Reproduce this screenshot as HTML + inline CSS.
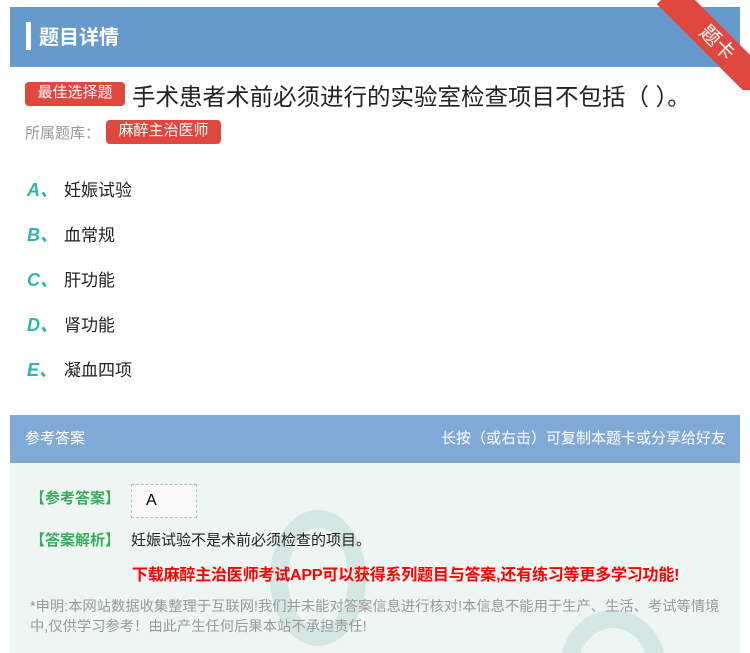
<!DOCTYPE html>
<html><head><meta charset="utf-8"><style>
html,body{margin:0;width:750px;height:653px;overflow:hidden}
body{background:#fff;font-family:"Liberation Sans","Noto Sans CJK SC",sans-serif;position:relative}
.abs{position:absolute}
.hdr{left:10px;top:7px;width:730px;height:60px;background:#6699cc}
.bar{left:26px;top:22px;width:5px;height:28px;background:#fff}
.tag{background:#e0473f;color:#fff;border-radius:4px}
.opt{left:27px;font-size:17px;color:#222}
.opt b{color:#2cb5ad;font-style:italic;font-size:18px;display:inline-block;width:37px}
</style></head><body>
<div class="abs hdr"></div>
<div class="abs bar"></div>
<div class="abs" style="left:39px;top:21px;color:#fff;font-size:20px;font-weight:bold">题目详情</div>
<div class="abs" style="left:650px;top:0;width:100px;height:90px;overflow:hidden">
 <div style="position:absolute;left:28px;top:-17px;width:140px;height:30px;background:#e0473f;transform:rotate(45deg);transform-origin:0 0;color:#fff;font-size:20px;text-align:center;line-height:30px">题卡</div>
</div>
<div class="abs tag" style="left:25px;top:82px;width:100px;height:24px;font-size:15px;line-height:22px;text-align:center">最佳选择题</div>
<div class="abs" style="left:132px;top:78px;font-size:23.5px;color:#222;white-space:nowrap">手术患者术前必须进行的实验室检查项目不包括（ ）。</div>
<div class="abs" style="left:25px;top:122px;font-size:15px;color:#999">所属题库：</div>
<div class="abs tag" style="left:106px;top:120px;width:115px;height:24px;font-size:15px;line-height:22px;text-align:center">麻醉主治医师</div>
<div class="abs opt" style="top:176px"><b>A、</b>妊娠试验</div>
<div class="abs opt" style="top:221px"><b>B、</b>血常规</div>
<div class="abs opt" style="top:266px"><b>C、</b>肝功能</div>
<div class="abs opt" style="top:311px"><b>D、</b>肾功能</div>
<div class="abs opt" style="top:356px"><b>E、</b>凝血四项</div>
<div class="abs" style="left:10px;top:415px;width:730px;height:48px;background:#80aad5"></div>
<div class="abs" style="left:25px;top:427px;color:#fff;font-size:15px">参考答案</div>
<div class="abs" style="right:24px;top:427px;color:#fff;font-size:15px">长按（或右击）可复制本题卡或分享给好友</div>
<div class="abs" style="left:10px;top:463px;width:730px;height:190px;background:#eef6f4;overflow:hidden">
 <div class="abs" style="left:260px;top:47px;width:60px;height:100px;border-radius:50%;border:18px solid #c5ddd5;opacity:.6"></div>
 <div class="abs" style="left:550px;top:147px;width:70px;height:80px;border-radius:50%;border:18px solid #c5ddd5;opacity:.6"></div>
</div>
<div class="abs" style="left:30px;top:487px;color:#3aaa5a;font-size:15px;font-weight:bold">【参考答案】</div>
<div class="abs" style="left:131px;top:484px;width:64px;height:32px;background:#fafafa;border:1px dashed #bbb;font-size:16px;line-height:32px;text-indent:14px">A</div>
<div class="abs" style="left:30px;top:529px;color:#3aaa5a;font-size:15px;font-weight:bold">【答案解析】</div>
<div class="abs" style="left:131px;top:529px;color:#222;font-size:15px">妊娠试验不是术前必须检查的项目。</div>
<div class="abs" style="left:132px;top:561px;color:#f00;font-size:16px;font-weight:bold;white-space:nowrap;letter-spacing:-0.2px">下载麻醉主治医师考试APP可以获得系列题目与答案,还有练习等更多学习功能!</div>
<div class="abs" style="left:30px;top:597px;width:705px;color:#999;font-size:14.3px;line-height:20px">*申明:本网站数据收集整理于互联网!我们并未能对答案信息进行核对!本信息不能用于生产、生活、考试等情境中,仅供学习参考！由此产生任何后果本站不承担责任!</div>
</body></html>
